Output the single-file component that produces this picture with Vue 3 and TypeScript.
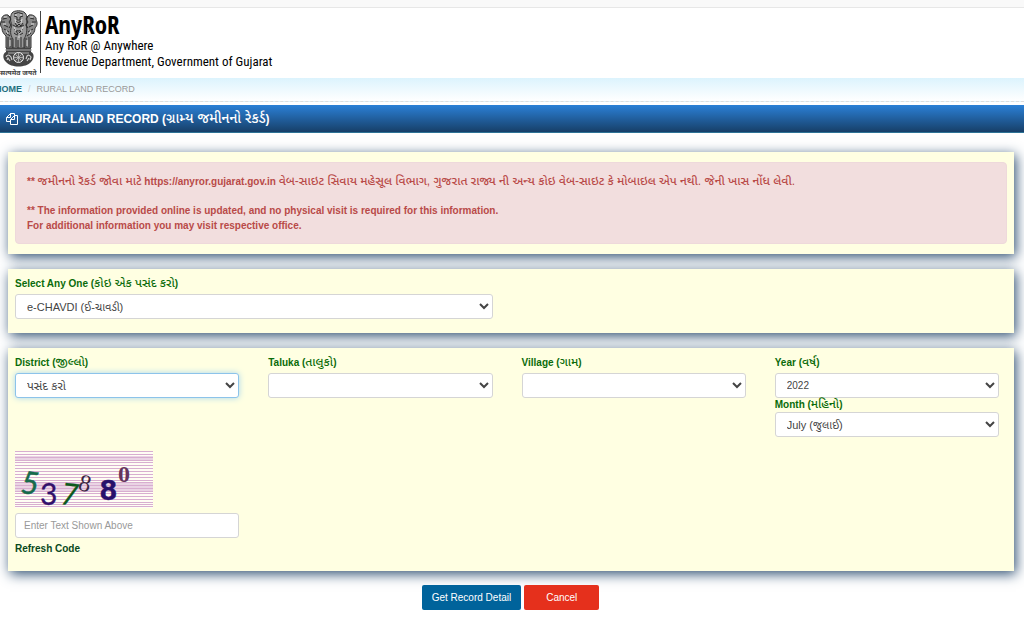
<script setup lang="ts">
import { ref } from 'vue'

interface Field {
  id: string
  en: string
  gu: string
  options: string[]
  size?: 'latin' | 'gujarati'
}

const service: Field = { id: 'service', en: 'Select Any One', gu: 'કોઇ એક પસંદ કરો', options: ['e-CHAVDI (ઈ-ચાવડી)'] }

const columns: Field[][] = [
  [{ id: 'district', en: 'District', gu: 'જીલ્લો', options: ['પસંદ કરો'], size: 'gujarati' }],
  [{ id: 'taluka', en: 'Taluka', gu: 'તાલુકો', options: [''] }],
  [{ id: 'village', en: 'Village', gu: 'ગામ', options: [''] }],
  [
    { id: 'year', en: 'Year', gu: 'વર્ષ', options: ['2022'], size: 'latin' },
    { id: 'month', en: 'Month', gu: 'મહિનો', options: ['July (જુલાઈ)'] },
  ],
]

const captchaLines = [1, 4, 7, 10, 12, 15, 18, 21, 24, 27, 30, 32, 35, 38, 41, 43, 46, 49, 52, 54, 56]
const captchaText = ref('')
</script>

<template>
  <div class="page">
    <div class="topbar"></div>
    <header class="brand">
      <svg class="emblem" viewBox="0 0 37 57" role="img" aria-label="State emblem of India">
        <g fill="#888" stroke="#333" stroke-width="1">
          <path d="M8 5C3 4 1 8 2 10C0 12 0 16 2 18C2 22 4 24 6 26L6 38H13L14 12Z" />
          <path d="M29 5C34 4 37 8 36 10C38 13 37 16 35 18C35 22 33 24 31 26L31 38H24L23 12Z" />
          <path d="M12 3C14 0 23 0 25 3C28 6 27 12 26 15C28 20 26 26 24 29L24 38H13L13 29C10 25 10 20 12 15C10 11 10 6 12 3Z" fill="#999" />
        </g>
        <g fill="none" stroke="#2a2a2a" stroke-width="1">
          <path d="M14 4Q18 1 23 4M14 6L17 7M20 7L23 6M17 7V10H20V7M15 11Q18 14 22 11M13 15Q18 19 24 15M14 19Q18 23 23 19M14 23Q18 27 23 23M16 27V37M21 27V37M18 30V38M3 9L7 8M5 12H1M4 15L8 17M4 19L9 22M6 23L10 26M34 9L30 8M32 12H36M33 15L29 17M33 19L28 22M31 23L27 26M8 27V37M11 28V37M26 28V37M29 27V37" />
          <path d="M9 6L11 9L9 12L11 15L9 18M28 6L26 9L28 12L26 15L28 18M15 13L17 16L19 14L21 16L23 13M16 21L18 24L21 21" />
        </g>
        <g fill="none" stroke="#ddd" stroke-width="1">
          <path d="M15 5H17M20 5H22M15 9L16 13M22 9L21 13M4 7H7M30 7H33M3 14L6 14M31 14H34M6 20L8 24M31 20L29 24M14 17L16 21M23 17L21 21M10 30V36M27 30V36M19 23V28" />
        </g>
        <path d="M6 38H31V42C34 43 35 48 31 52C26 58 11 58 6 52C2 48 3 43 6 42Z" fill="#444" />
        <path d="M5 40H32M8 43H29" stroke="#aaa" stroke-width="1" />
        <circle cx="18.5" cy="47.5" r="5" fill="#555" stroke="#eee" />
        <path d="M18.5 43V52M14 47.5H23M15.5 44.5L21.5 50.5M21.5 44.5L15.5 50.5" stroke="#ccc" stroke-width=".7" />
        <path d="M6 47Q8 43 11 47L12 50M7 50L8 48L10 51M26 49L27 46Q29 44 31 47L30 50M27 51L29 48" fill="none" stroke="#ccc" stroke-width="1.2" />
        <text x="0" y="65" class="motto">सत्यमेव जयते</text>
      </svg>
      <div class="brand-text">
        <h1>AnyRoR</h1>
        <p>Any RoR @ Anywhere</p>
        <p>Revenue Department, Government of Gujarat</p>
      </div>
    </header>

    <nav class="breadcrumb" aria-label="Breadcrumb">
      <a href="#">HOME</a><span class="slash">/</span><span>RURAL LAND RECORD</span>
    </nav>

    <h2 class="titlebar">
      <svg class="copy" viewBox="0 0 12 12" aria-hidden="true">
        <path d="M4.500 2.500V.5H8.500V2.500M4.500 .5L.5 4.500V8.500H4.500M4.500 .5V4.500H.5M8.500 2.500H11.500V11.500H4.500V6.500L8.500 2.500V6.500H4.500" />
      </svg>
      <span>RURAL LAND RECORD (<span lang="gu">ગ્રામ્ય જમીનનો રેકર્ડ</span>)</span>
    </h2>

    <main>
      <section class="panel notice">
        <div class="alert">
          <p>** <span lang="gu">જમીનનો રૅકર્ડ જોવા માટે</span> https://anyror.gujarat.gov.in <span lang="gu">વેબ-સાઇટ સિવાય મહેસૂલ વિભાગ, ગુજરાત રાજ્ય ની અન્ય કોઇ વેબ-સાઇટ કે મોબાઇલ એપ નથી. જેની ખાસ નોંધ લેવી.</span></p>
          <p>** The information provided online is updated, and no physical visit is required for this information.<br />For additional information you may visit respective office.</p>
        </div>
      </section>

      <section class="panel service">
        <div class="grid">
          <div class="wide">
            <label :for="service.id">{{ service.en }} (<span lang="gu">{{ service.gu }}</span>)</label>
            <select :id="service.id">
              <option v-for="o in service.options" :key="o">{{ o }}</option>
            </select>
          </div>
        </div>
      </section>

      <section class="panel details">
        <div class="grid">
          <div v-for="(col, i) in columns" :key="i">
            <template v-for="f in col" :key="f.id">
              <label :for="f.id">{{ f.en }} (<span lang="gu">{{ f.gu }}</span>)</label>
              <select :id="f.id" :class="[f.size, { active: f.id === 'district' }]">
                <option v-for="o in f.options" :key="o">{{ o }}</option>
              </select>
            </template>
          </div>
        </div>
        <div class="grid">
          <div>
            <svg class="captcha" viewBox="0 0 138 57" role="img" aria-label="Captcha">
              <rect width="138" height="57" fill="#fffdf4" />
              <rect y="5" width="138" height="5" fill="#ead4e4" />
              <rect y="31" width="138" height="10" fill="#ead4e4" />
              <path v-for="y in captchaLines" :key="y" :d="`M0 ${y - 0.5}H138`" stroke="#d8aed0" />
              <text x="6" y="43" class="d5" transform="rotate(6 15 33)">5</text>
              <text x="25" y="54" class="d3">3</text>
              <text x="46" y="54" class="d7" transform="rotate(6 55 44)">7</text>
              <text x="64" y="40" class="d8s" transform="rotate(14 69 32)">8</text>
              <text x="85" y="49" class="d8">8</text>
              <text x="103" y="31" class="d0">0</text>
            </svg>
            <input v-model="captchaText" type="text" placeholder="Enter Text Shown Above" aria-label="Enter Text Shown Above" />
            <a class="refresh" href="#">Refresh Code</a>
          </div>
        </div>
      </section>
    </main>

    <div class="actions">
      <button type="button" class="primary">Get Record Detail</button>
      <button type="button" class="danger">Cancel</button>
    </div>
  </div>
</template>

<style>
body {
  margin: 0;
  background: #fff;
}
</style>

<style scoped>
* {
  box-sizing: border-box;
}
.page {
  font-family: "Liberation Sans", "Noto Sans Gujarati", Arial, sans-serif;
  font-size: 10px;
  line-height: 15px;
  color: #333;
  overflow: hidden;
}
h1, h2, p {
  margin: 0;
}
[lang="gu"] {
  font-size: 12px;
  font-weight: 500;
  line-height: 1;
}
.topbar {
  height: 8px;
  background: #f9f9f9;
  border-bottom: 1px solid #e7e7e7;
}
.brand {
  display: flex;
  height: 70px;
  padding-top: 2px;
}
.emblem {
  width: 37px;
  height: 57px;
  overflow: visible;
}
.motto {
  font-family: "Noto Sans Devanagari", "Noto Sans", sans-serif;
  font-size: 7px;
  font-weight: 700;
  fill: #444;
}
.brand-text {
  margin-left: 3px;
  padding-left: 4px;
  height: 62px;
  margin-top: 1px;
  border-left: 1px solid #444;
  font-family: "Open Sans Condensed", "Roboto Condensed", "Liberation Sans Narrow", "Open Sans", sans-serif;
  color: #000;
}
.brand-text h1 {
  font-size: 25px;
  line-height: 27px;
  font-weight: 700;
}
.brand-text p {
  font-family: "Roboto Condensed", "Liberation Sans Narrow", "Open Sans Condensed", sans-serif;
  font-size: 13px;
  line-height: 16px;
}
.breadcrumb {
  height: 24px;
  padding-top: 4px;
  background: linear-gradient(#dcf3fd, #fff);
  border-bottom: 1px dashed #ddd;
  font-size: 9px;
  line-height: 15px;
  color: #999;
  margin-bottom: 3px;
}
.breadcrumb a {
  color: #1c6f7d;
  font-weight: 700;
  text-decoration: none;
  margin-left: -5px;
}
.slash {
  color: #ccc;
  margin: 0 6px;
}
.titlebar {
  display: flex;
  align-items: center;
  gap: 7px;
  height: 28px;
  padding: 0 6px;
  background: linear-gradient(#2b80d6, #173f68);
  border-bottom: 1px solid #2e7396;
  color: #fff;
  font-size: 12px;
  font-weight: 700;
}
.titlebar [lang="gu"] {
  font-size: 14px;
}
.copy {
  width: 12px;
  height: 12px;
  fill: none;
  stroke: #fff;
  stroke-width: 1;
}
main {
  display: flex;
  flex-direction: column;
  gap: 15px;
  padding: 19px 10px 14px 8px;
}
.panel {
  background: #ffffe2;
  box-shadow: 2px 3px 12px #2e4f71;
  padding: 7px 15px 14px 7px;
}
.notice {
  padding: 10px 7px;
}
.details {
  padding-bottom: 15px;
}
.alert {
  background: #f2dede;
  border: 1px solid #eed9db;
  border-radius: 4px;
  color: #b94a48;
  font-weight: 700;
  padding: 11px 11px 10px;
  display: grid;
  gap: 14px;
}
.grid {
  display: grid;
  grid-template-columns: repeat(4, minmax(0, 1fr));
  gap: 0 29px;
}
.wide {
  grid-column: span 2;
}
label {
  display: block;
  height: 15px;
  color: #0a6b0a;
  font-weight: 700;
  line-height: 15px;
  white-space: nowrap;
}
select,
input {
  display: block;
  width: 100%;
  height: 25px;
  border: 1px solid #d5d5d5;
  border-radius: 3px;
  background: #fff;
  color: #444;
  font: inherit;
  line-height: 15px;
  padding: 0 0 0 7px;
}
select {
  margin-top: 3px;
  font-size: 11px;
}
select.latin {
  font-size: 10px;
}
select.gujarati {
  font-size: 12px;
}
select + label {
  height: 14px;
  line-height: 14px;
}
select + label + select {
  margin-top: 0;
}
select.active {
  border-color: #8cc3ea;
  box-shadow: 0 0 6px #a9d6ee;
}
input {
  margin-top: 5px;
  padding: 0 8px;
}
input::placeholder {
  color: #999;
  opacity: 1;
}
.captcha {
  display: block;
  width: 138px;
  height: 57px;
  margin-top: 14px;
  overflow: visible;
}
.d5 { font: italic 31px Lato, sans-serif; fill: #176b4c; stroke: #176b4c; stroke-width: .5; }
.d3 { font: 30px Lato, sans-serif; fill: #32106b; stroke: #32106b; stroke-width: .3; }
.d7 { font: italic 30px Lato, sans-serif; fill: #0c5a1c; stroke: #0c5a1c; stroke-width: .3; }
.d8s { font: 24px "Liberation Serif", serif; fill: #3b2540; }
.d8 { font: bold 30px "Liberation Sans", sans-serif; fill: #27106b; stroke: #27106b; stroke-width: .5; }
.d0 { font: bold 24px "Liberation Serif", serif; fill: #66365c; }
.refresh {
  display: inline-block;
  margin-top: 3px;
  color: #0a4a1c;
  font-weight: 700;
  text-decoration: none;
}
.actions {
  display: flex;
  justify-content: center;
  gap: 3px;
  padding-right: 3px;
}
button {
  height: 25px;
  border: 0;
  border-radius: 2px;
  color: #fff;
  font: inherit;
  padding: 0 10px;
}
.primary {
  background: #00639b;
}
.danger {
  background: #e5301c;
  padding: 0 22px;
}
</style>
